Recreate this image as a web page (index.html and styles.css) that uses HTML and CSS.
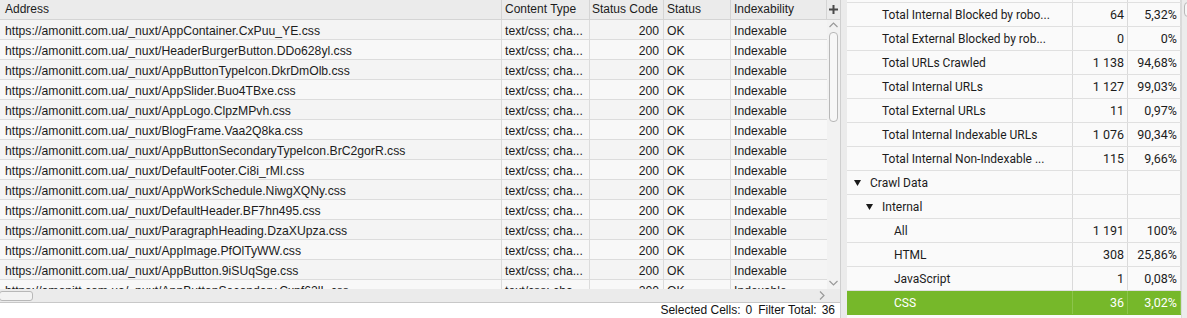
FILE: index.html
```html
<!DOCTYPE html>
<html lang="en">
<head>
    <meta charset="UTF-8">
    <title>Crawl - CSS</title>
    <link rel="stylesheet" href="styles.css">
</head>
<body>
    <div class="app">
        <section class="grid-pane">
            <div class="grid-head">
                <div class="cell c-addr">Address</div>
                <div class="cell c-type">Content Type</div>
                <div class="cell c-code">Status Code</div>
                <div class="cell c-status">Status</div>
                <div class="cell c-index">Indexability</div>
                <div class="c-add">
                    <svg width="9" height="9" viewBox="0 0 9 9"><path d="M3.5 0h2v3.5H9v2H5.5V9h-2V5.5H0v-2h3.5z" fill="#4a4a4a"/></svg>
                </div>
            </div>
            <div class="grid-body">
                <div class="rows" id="rows"></div>
                <div class="vscroll">
                    <svg class="arrow" width="9" height="6" viewBox="0 0 9 6"><path d="M0.5 5L4.5 1L8.5 5" fill="none" stroke="#9a9a9a" stroke-width="1.2"/></svg>
                    <div class="vthumb"></div>
                    <svg class="arrow down" width="9" height="6" viewBox="0 0 9 6"><path d="M0.5 1L4.5 5L8.5 1" fill="none" stroke="#9a9a9a" stroke-width="1.2"/></svg>
                </div>
            </div>
            <div class="hscroll">
                <div class="hthumb"></div>
                <svg class="arrow" width="6" height="9" viewBox="0 0 6 9"><path d="M1 0.5L5 4.5L1 8.5" fill="none" stroke="#9a9a9a" stroke-width="1.2"/></svg>
            </div>
            <div class="statusbar">
                <span>Selected Cells:</span><span>0</span>
                <span class="gap">Filter Total:</span><span>36</span>
            </div>
        </section>
        <div class="splitter"></div>
        <section class="overview">
            <div class="tree" id="tree"></div>
            <div class="oscroll"><div class="othumb"></div></div>
        </section>
    </div>

    <script>
        const files = [
            'AppContainer.CxPuu_YE.css',
            'HeaderBurgerButton.DDo628yl.css',
            'AppButtonTypeIcon.DkrDmOlb.css',
            'AppSlider.Buo4TBxe.css',
            'AppLogo.ClpzMPvh.css',
            'BlogFrame.Vaa2Q8ka.css',
            'AppButtonSecondaryTypeIcon.BrC2gorR.css',
            'DefaultFooter.Ci8i_rMl.css',
            'AppWorkSchedule.NiwgXQNy.css',
            'DefaultHeader.BF7hn495.css',
            'ParagraphHeading.DzaXUpza.css',
            'AppImage.PfOlTyWW.css',
            'AppButton.9iSUqSge.css',
            'AppButtonSecondary.Cxpf62lL.css'
        ];

        const rowsEl = document.getElementById('rows');
        files.forEach((name, i) => {
            const row = document.createElement('div');
            row.className = 'row' + (i % 2 ? ' alt' : '');
            row.innerHTML =
                '<div class="cell c-addr">https://amonitt.com.ua/_nuxt/' + name + '</div>' +
                '<div class="cell c-type">text/css; cha...</div>' +
                '<div class="cell c-code">200</div>' +
                '<div class="cell c-status">OK</div>' +
                '<div class="cell c-index">Indexable</div>';
            rowsEl.appendChild(row);
        });

        // level: 0 = section, 1 = subsection, 2 = item
        const treeItems = [
            { label: 'Total Internal Blocked by robo...', count: '64', pct: '5,32%', level: 1 },
            { label: 'Total External Blocked by rob...', count: '0', pct: '0%', level: 1 },
            { label: 'Total URLs Crawled', count: '1 138', pct: '94,68%', level: 1 },
            { label: 'Total Internal URLs', count: '1 127', pct: '99,03%', level: 1 },
            { label: 'Total External URLs', count: '11', pct: '0,97%', level: 1 },
            { label: 'Total Internal Indexable URLs', count: '1 076', pct: '90,34%', level: 1 },
            { label: 'Total Internal Non-Indexable ...', count: '115', pct: '9,66%', level: 1 },
            { label: 'Crawl Data', count: '', pct: '', level: 0, open: true },
            { label: 'Internal', count: '', pct: '', level: 1, open: true },
            { label: 'All', count: '1 191', pct: '100%', level: 2 },
            { label: 'HTML', count: '308', pct: '25,86%', level: 2 },
            { label: 'JavaScript', count: '1', pct: '0,08%', level: 2 },
            { label: 'CSS', count: '36', pct: '3,02%', level: 2, selected: true }
        ];

        const treeEl = document.getElementById('tree');
        const firstRow = document.createElement('div');
        firstRow.className = 'trow partial';
        firstRow.innerHTML = '<div class="tcell"></div><div class="tcell"></div><div class="tcell"></div>';
        treeEl.appendChild(firstRow);

        treeItems.forEach(item => {
            const row = document.createElement('div');
            row.className = 'trow' + (item.selected ? ' selected' : '');
            const caret = item.open
                ? '<svg class="caret" width="7" height="6" viewBox="0 0 7 6"><path d="M0 0h7L3.5 6z" fill="#1a1a1a"/></svg>'
                : '';
            row.innerHTML =
                '<div class="tcell name lvl' + item.level + '">' + caret + '<span>' + item.label + '</span></div>' +
                '<div class="tcell num">' + item.count + '</div>' +
                '<div class="tcell num">' + item.pct + '</div>';
            treeEl.appendChild(row);
        });
    </script>
</body>
</html>
```

FILE: styles.css
```css
* {
    box-sizing: border-box;
    margin: 0;
    padding: 0;
}
body {
    width: 1187px;
    height: 318px;
    overflow: hidden;
    background-color: #ebebeb;
    color: #1c1c1c;
}
.app {
    display: flex;
    height: 318px;
    overflow: hidden;
}

/* left data grid */
.grid-pane {
    width: 840px;
    display: flex;
    flex-direction: column;
    font-family: 'Liberation Sans', Arial, sans-serif;
    font-size: 12.2px;
}
.grid-head {
    display: flex;
    height: 20px;
    font-size: 12px;
    background-color: #ebebeb;
    border-bottom: 1px solid #d4d4d4;
}
.grid-head .cell {
    border-right: 1px solid #d4d4d4;
    line-height: 19px;
}
.cell {
    flex: none;
    padding: 0 4px 0 3px;
    white-space: nowrap;
    overflow: hidden;
}
.c-addr { width: 502px; padding-left: 5px; }
.c-type { width: 88px; }
.c-code { width: 74px; }
.c-status { width: 67px; }
.c-index { width: 96px; }
.grid-head .c-code { padding-left: 2px; }
.row .c-code { text-align: right; }
.c-add {
    width: 13px;
    display: flex;
    align-items: center;
    justify-content: center;
    padding-bottom: 1px;
}
.grid-body {
    display: flex;
    height: 269px;
    overflow: hidden;
}
.rows {
    width: 827px;
}
.row {
    display: flex;
    height: 20px;
    background-color: #f4f4f4;
    border-bottom: 1px solid #dcdcdc;
}
.row.alt {
    background-color: #f8f8f8;
}
.row .cell {
    line-height: 19px;
    padding-top: 2px;
    border-right: 1px solid #dcdcdc;
}
.row .c-index {
    border-right: none;
}
.vscroll {
    width: 13px;
    display: flex;
    flex-direction: column;
    align-items: center;
    background-color: #f2f2f2;
    padding-top: 2px;
}
.vthumb {
    width: 9px;
    height: 90px;
    margin-top: 4px;
    border: 1px solid #b8b8b8;
    border-radius: 4px;
    background-color: #f7f7f7;
}
.arrow.down {
    margin-top: auto;
    margin-bottom: 3px;
}
.hscroll {
    height: 14px;
    display: flex;
    align-items: center;
    justify-content: space-between;
    padding-right: 15px;
    background-color: #ebebeb;
    border-bottom: 1px solid #c8c8c8;
}
.hthumb {
    width: 34px;
    height: 10px;
    margin-left: -1px;
    border: 1px solid #b8b8b8;
    border-radius: 3px;
    background-color: #f3f3f3;
}
.statusbar {
    height: 15px;
    display: flex;
    justify-content: flex-end;
    gap: 5px;
    padding-right: 5px;
    font-size: 12px;
    line-height: 15px;
    background-color: #ffffff;
    color: #111;
}
.statusbar .gap {
    margin-left: 1px;
}

/* splitter */
.splitter {
    width: 7px;
    border-left: 1px solid #cfcfcf;
    background-color: #ebebeb;
}

/* right overview tree */
.overview {
    flex: 1;
    display: flex;
    overflow: hidden;
    font-family: Roboto, 'Noto Sans', sans-serif;
    font-size: 12px;
    background-color: #fafafa;
}
.tree {
    width: 334px;
}
.trow {
    display: grid;
    grid-template-columns: 226px 55px 53px;
    height: 24px;
    border-bottom: 1px solid #e0e0e0;
    background-color: #fafafa;
}
.trow.partial {
    height: 3px;
}
.trow.selected {
    background-color: #76b82a;
    color: #ffffff;
    border-bottom-color: #76b82a;
}
.tcell {
    border-right: 1px solid #dadada;
    line-height: 24px;
    white-space: nowrap;
    overflow: hidden;
}
.trow.selected .tcell {
    border-right-color: #8cc44c;
}
.tcell.num {
    text-align: right;
    padding-right: 3px;
    font-size: 12.5px;
}
.tcell.name {
    display: flex;
    align-items: center;
    padding-top: 1px;
}
.caret {
    flex: none;
    margin-right: 9px;
}
.lvl0 { padding-left: 7px; }
.lvl1 { padding-left: 35px; }
.lvl1 .caret { margin-left: -16px; }
.lvl2 { padding-left: 47px; }
.oscroll {
    width: 6px;
    background-color: #ececec;
    border-left: 1px solid #dadada;
}
.othumb {
    width: 8px;
    height: 15px;
    margin-top: 2px;
    margin-left: 2px;
    border: 1px solid #b8b8b8;
    border-radius: 4px;
    background-color: #f7f7f7;
}
```
